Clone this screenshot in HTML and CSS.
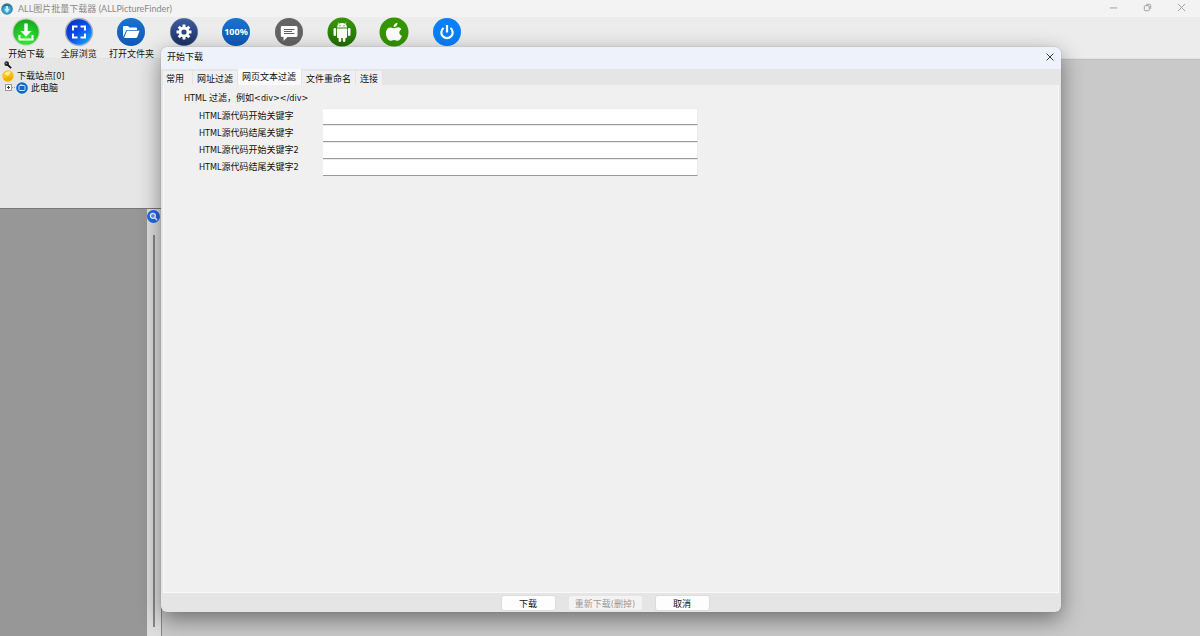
FILE: index.html
```html
<!DOCTYPE html>
<html lang="zh-CN">
<head>
<meta charset="utf-8">
<title>ALL图片批量下载器 (ALLPictureFinder)</title>
<link rel="stylesheet" href="styles.css">
</head>
<body>
<div class="app">
  <header class="titlebar">
    <svg class="logo" viewBox="0 0 12 12" aria-hidden="true">
      <defs><radialGradient id="globe" cx=".5" cy=".55"><stop offset="0" stop-color="#8ee4f4"/><stop offset=".6" stop-color="#35a3d0"/><stop offset="1" stop-color="#3d7898"/></radialGradient></defs>
      <circle cx="6" cy="6" r="5.8" fill="url(#globe)"/>
      <path d="M1 4q2-3 5-3t5 3l-3-1-2 1-2-1z" fill="#376f91"/>
      <path d="M5 3h2v3h1.500l-2.500 4-2.500-4h1.500z" fill="#c4f2fb"/>
    </svg>
    <h1 class="app-title">ALL图片批量下载器 (ALLPictureFinder)</h1>
    <div class="window-controls">
      <button class="window-button" aria-label="最小化"><svg viewBox="0 0 10 10"><path d="M1 5.500h8"/></svg></button>
      <button class="window-button" aria-label="还原"><svg viewBox="0 0 10 10"><rect x="1.500" y="3" width="5.500" height="5.500" rx="1"/><path d="M3.500 1.500h4q1 0 1 1v4"/></svg></button>
      <button class="window-button" aria-label="关闭"><svg viewBox="0 0 10 10"><path d="M1 1l8 8M9 1l-8 8"/></svg></button>
    </div>
  </header>

  <nav class="toolbar">
    <button class="tool">
      <svg class="tool-icon" viewBox="0 0 28 28"><defs><radialGradient id="green" cx=".5" cy=".8" r=".8"><stop offset="0" stop-color="#32f032"/><stop offset="1" stop-color="#14a81c"/></radialGradient></defs>
        <circle cx="14" cy="14" r="13.800" fill="#c4d0c4"/><circle cx="14" cy="14" r="12.600" fill="url(#green)"/>
        <path d="M12.300 5.500h3.400v7.500h3.800L14 18.800 8.500 13h3.800z" fill="#fff"/><path d="M7.500 17v4.500h13V17" fill="none" stroke="#fff" stroke-width="2"/></svg>
      <span>开始下载</span>
    </button>
    <button class="tool">
      <svg class="tool-icon" viewBox="0 0 28 28"><defs><linearGradient id="screen" x1="0" y1="0" x2="1" y2="1"><stop offset="0" stop-color="#0728b8"/><stop offset=".5" stop-color="#0a50f0"/><stop offset="1" stop-color="#16b8ff"/></linearGradient></defs>
        <circle cx="14" cy="14" r="14.200" fill="#a9b0c0"/><circle cx="14" cy="14" r="12.800" fill="url(#screen)"/>
        <path d="M12.500 8.500H8v4M15.500 8.500H20v4M8 15.500v4h4.500M20 15.500v4h-4.500" fill="none" stroke="#fff" stroke-width="2"/></svg>
      <span>全屏浏览</span>
    </button>
    <button class="tool">
      <svg class="tool-icon" viewBox="0 0 28 28"><defs><linearGradient id="blue" x1="0" y1="0" x2="0" y2="1"><stop offset="0" stop-color="#1873cf"/><stop offset="1" stop-color="#1058b4"/></linearGradient></defs>
        <circle cx="14" cy="14" r="14" fill="url(#blue)"/>
        <path d="M6 19V9q0-1 1-1h4l1.500 1.500H19q1 0 1 1V12H9.500z" fill="#fff"/><path d="M10 12.700h12.500L20.300 19q-.3 1-1.300 1H7z" fill="#fff"/></svg>
      <span>打开文件夹</span>
    </button>
    <button class="tool" aria-label="设置">
      <svg class="tool-icon" viewBox="0 0 28 28"><defs><linearGradient id="navy" x1="0" y1="0" x2="0" y2="1"><stop offset="0" stop-color="#3b5c9f"/><stop offset="1" stop-color="#1d2f63"/></linearGradient></defs>
        <circle cx="14" cy="14" r="13.800" fill="url(#navy)" stroke="#7385ad" stroke-width=".5"/>
        <g stroke="#fff" stroke-width="3"><path d="M14 6.500v15M6.500 14h15M8.700 8.700l10.600 10.600M19.300 8.700L8.700 19.300"/></g><circle cx="14" cy="14" r="5.400" fill="#fff"/><circle cx="14" cy="14" r="2.600" fill="#2c467f"/></svg>
    </button>
    <button class="tool" aria-label="100%">
      <svg class="tool-icon" viewBox="0 0 28 28"><circle cx="14" cy="14" r="14" fill="url(#blue)"/><text class="zoom-text" x="14" y="17" text-anchor="middle">100%</text></svg>
    </button>
    <button class="tool" aria-label="留言">
      <svg class="tool-icon" viewBox="0 0 28 28"><circle cx="14" cy="14" r="14" fill="#646464"/>
        <path d="M7 8h14q1.500 0 1.500 1.500v8Q22.500 19 21 19h-8.500l-4 4v-4H7q-1.200 0-1.200-1.500v-8Q5.800 8 7 8z" fill="#fff"/><path d="M9 11.500h10.500M9 13.500h8M9 15.500h10.500" stroke="#646464"/></svg>
    </button>
    <button class="tool" aria-label="Android">
      <svg class="tool-icon" viewBox="0 0 28 28"><defs><linearGradient id="android" x1="0" y1="0" x2="0" y2="1"><stop offset="0" stop-color="#389606"/><stop offset="1" stop-color="#217000"/></linearGradient></defs>
        <circle cx="14" cy="14" r="14.500" fill="url(#android)"/>
        <g fill="#fff"><path d="M9 9.500a5 4.500 0 0 1 10 0z"/><path d="M9 10.500h10v8.500q0 1-1 1h-8q-1 0-1-1z"/><rect x="5.500" y="10" width="2.600" height="8" rx="1.300"/><rect x="19.900" y="10" width="2.600" height="8" rx="1.300"/><rect x="10.600" y="18" width="2.600" height="6" rx="1.200"/><rect x="14.800" y="18" width="2.600" height="6" rx="1.200"/></g>
        <path d="M11 6L10 4.500M17 6l1-1.500" stroke="#fff" stroke-width=".7"/><circle cx="12" cy="7.700" r=".6" fill="#2d8003"/><circle cx="16" cy="7.700" r=".6" fill="#2d8003"/></svg>
    </button>
    <button class="tool" aria-label="Apple">
      <svg class="tool-icon" viewBox="0 0 28 28"><circle cx="14" cy="14" r="14.500" fill="#359500"/>
        <path d="M14 10.300c1.500-.1 2.400-1 4-1 1.500 0 2.700.8 3.400 1.900-3 1.700-2.600 5.400.5 6.700-.8 2.100-2.200 4.700-4.100 4.800-1.400.1-2-.8-3.700-.8s-2.300.8-3.700.8c-2.500 0-5-5.200-4.400-8.800.3-2.700 2.200-4.500 4.400-4.500 1.500 0 2.400.9 3.600.9z" fill="#fff"/><path d="M13.600 9.200c-.2-2.300 1.500-4.300 3.800-4.500.2 2.400-1.500 4.400-3.800 4.500z" fill="#fff"/></svg>
    </button>
    <button class="tool" aria-label="退出">
      <svg class="tool-icon" viewBox="0 0 28 28"><circle cx="14" cy="14" r="14" fill="#0880fa"/>
        <path d="M10.500 10a5.700 5.700 0 1 0 7 0M14 7v7.500" fill="none" stroke="#fff" stroke-width="2.200"/></svg>
    </button>
  </nav>

  <div class="workspace">
    <aside class="sidebar">
      <section class="tree-panel">
        <svg class="pin" viewBox="0 0 9 9" aria-hidden="true"><circle cx="3" cy="3" r="2.600" fill="#222"/><path d="M4 4l4 4" stroke="#111" stroke-width="2"/><circle cx="2.600" cy="2.600" r="1" fill="#888"/></svg>
        <ul class="tree">
          <li class="tree-row">
            <svg class="tree-icon" viewBox="0 0 12 12"><circle cx="6" cy="6" r="5.700" fill="#f8c211"/><path d="M2 4q3-4 7-2L6 6z" fill="#ffee91"/><path d="M1 9q4-2 10-3-1 5-5 5.600Q3 11.500 1 9z" fill="#f5a900"/></svg>
            <span>下载站点[0]</span>
          </li>
          <li class="tree-row tree-child">
            <svg class="expander" viewBox="0 0 10 8"><rect x=".5" y=".5" width="6" height="6" fill="#fff" stroke="#999"/><path d="M2 3.500h3M3.500 2v3" stroke="#345"/><path d="M7 3.500h3" stroke="#999" stroke-dasharray="1 1"/></svg>
            <svg class="tree-icon" viewBox="0 0 12 12"><circle cx="6" cy="6" r="5.800" fill="#0d66cb"/><rect x="3" y="3.500" width="6" height="5" rx=".7" fill="none" stroke="#c8e4ff"/><path d="M4 3h2.500" stroke="#c8e4ff"/></svg>
            <span>此电脑</span>
          </li>
        </ul>
      </section>
      <section class="preview">
        <div class="preview-canvas"></div>
        <div class="zoom-strip">
          <button class="zoom-button" aria-label="缩放"><svg viewBox="0 0 13 13"><circle cx="6.500" cy="6.500" r="6.500" fill="#246ae4"/><circle cx="5.900" cy="5.800" r="2.500" fill="#5f9bff" stroke="#fff" stroke-width="1.200"/><path d="M7.800 7.800l2.400 2.400" stroke="#fff" stroke-width="1.400"/></svg></button>
          <div class="zoom-track"></div>
        </div>
      </section>
    </aside>
    <main class="gallery"></main>
  </div>

  <div class="dialog" role="dialog" aria-labelledby="dialog-title">
    <header class="dialog-header">
      <h2 class="dialog-title" id="dialog-title">开始下载</h2>
      <button class="dialog-close" aria-label="关闭"><svg viewBox="0 0 9 9"><path d="M.7.7l7.600 7.600M8.300.7L.7 8.300"/></svg></button>
    </header>
    <div class="tabs" role="tablist">
      <button class="tab tab-first" role="tab">常用</button>
      <button class="tab" role="tab">网址过滤</button>
      <button class="tab tab-active" role="tab" aria-selected="true">网页文本过滤</button>
      <button class="tab" role="tab">文件重命名</button>
      <button class="tab" role="tab">连接</button>
    </div>
    <form class="panel" id="filters">
      <p class="hint">HTML 过滤，例如&lt;div&gt;&lt;/div&gt;</p>
      <div class="fields">
        <label class="field-label" for="start1">HTML源代码开始关键字</label><input class="field" id="start1" type="text">
        <label class="field-label" for="end1">HTML源代码结尾关键字</label><input class="field" id="end1" type="text">
        <label class="field-label" for="start2">HTML源代码开始关键字2</label><input class="field" id="start2" type="text">
        <label class="field-label" for="end2">HTML源代码结尾关键字2</label><input class="field" id="end2" type="text">
      </div>
    </form>
    <footer class="dialog-footer">
      <button class="action">下载</button>
      <button class="action action-wide" disabled>重新下载(删掉)</button>
      <button class="action">取消</button>
    </footer>
  </div>
</div>
</body>
</html>
```

FILE: styles.css
```css
* { box-sizing: border-box; }

body {
  margin: 0;
  font: 9px/12px "DejaVu Sans Condensed", "Noto Sans CJK SC", sans-serif;
  color: #111;
}

h1, h2, p, ul { margin: 0; padding: 0; font-size: inherit; font-weight: normal; }

button {
  margin: 0;
  padding: 0;
  border: 0;
  background: none;
  font: inherit;
  color: inherit;
  white-space: nowrap;
}

svg { display: block; overflow: visible; }

.app {
  position: relative;
  display: flex;
  flex-direction: column;
  height: 100vh;
  overflow: hidden;
}

.titlebar {
  display: flex;
  align-items: center;
  height: 17px;
  padding-left: 1px;
  background: #f3f3f3;
  color: #8a8a8a;
}
.logo { width: 12px; height: 12px; }
.app-title { margin-left: 5px; font-family: Lato, "Noto Sans CJK SC", sans-serif; }
.window-controls { display: flex; margin-left: auto; padding-right: 2px; }
.window-button { display: grid; place-items: center; width: 34px; height: 17px; padding-bottom: 2px; }
.window-button svg { width: 9px; height: 9px; fill: none; stroke: #999; }

.toolbar {
  display: grid;
  grid-template-columns: repeat(9, 1fr);
  height: 42px;
  padding: 1px calc(100% - 473px) 0 0;
  background: #ececec;
  border-bottom: 1px solid #e2e2e2;
}
.tool { display: flex; flex-direction: column; align-items: center; }
.tool-icon { width: 28px; height: 28px; }
.tool span { margin-top: 2px; }
.zoom-text { font: bold 9px "Noto Sans", sans-serif; fill: #fff; }

.workspace { display: flex; flex: 1; min-height: 0; }
.sidebar { display: flex; flex-direction: column; width: 162px; }
.tree-panel {
  flex: 0 0 150px;
  padding: 2px;
  background: #e6e6e6;
  border-bottom: 1px solid #777;
}
.pin { width: 8px; height: 8px; margin: 0 0 1px 2px; }
.tree { list-style: none; }
.tree-row { display: flex; align-items: center; gap: 3px; height: 12px; }
.tree-child { padding-left: 3px; }
.tree-icon { width: 12px; height: 12px; }
.expander { width: 10px; height: 8px; margin-right: -2px; }
.preview { display: flex; flex: 1; }
.preview-canvas { flex: 1; background: #979797; }
.zoom-strip {
  display: flex;
  flex-direction: column;
  align-items: center;
  width: 15px;
  padding: 1px 1px 9px 0;
  background: #dedede;
  border-right: 1px solid #888;
}
.zoom-button svg { width: 13px; height: 13px; }
.zoom-track { flex: 1; width: 2px; margin-top: 12px; background: #888; }
.gallery { flex: 1; background: #c9c9c9; border-top: 1px solid #bfbfbf; }

.dialog {
  position: absolute;
  top: 47px;
  right: 139px;
  bottom: 24px;
  left: 161px;
  display: flex;
  flex-direction: column;
  overflow: hidden;
  border-radius: 6px;
  background: #e5e5e5;
  box-shadow: 0 0 1px #777, 0 7px 22px rgba(0, 0, 0, .45);
}
.dialog-header {
  display: flex;
  align-items: center;
  justify-content: space-between;
  height: 22px;
  padding: 0 7px 2px 6px;
  background: #edf2fb;
}
.dialog-close { display: grid; place-items: center; height: 16px; }
.dialog-close svg { width: 8px; height: 8px; fill: none; stroke: #222; }

.tabs { display: flex; align-items: flex-end; height: 16px; padding-left: 2px; }
.tab {
  height: 14px;
  padding: 1px 4px 0;
  background: #f0f0f0;
  border-right: 1px solid #e3e3e3;
}
.tab-first { padding-left: 3px; padding-right: 8px; }
.tab-active { height: 16px; padding: 0 5px 0 4px; background: #fafafa; }

.panel {
  flex: 1;
  margin: 0 2px;
  padding: 7px 20px;
  background: #f0f0f0;
  border: solid #f9f9f9;
  border-width: 0 1px 1px;
}
.fields {
  display: grid;
  grid-template-columns: 124px 375px;
  grid-auto-rows: 17px;
  margin: 4px 0 0 15px;
}
.field-label { padding-top: 2px; }
.field {
  width: 100%;
  height: 17px;
  padding: 0 3px;
  border: solid #ececec;
  border-width: 1px 1px 1px 0;
  border-bottom-color: #999;
  background: #fff;
  font: inherit;
  outline: 0;
}

.dialog-footer {
  display: flex;
  align-items: center;
  justify-content: center;
  gap: 14px;
  height: 19px;
  padding-right: 12px;
}
.action {
  width: 53px;
  height: 14px;
  padding-top: 2px;
  border-radius: 2px;
  background: #fdfdfd;
  box-shadow: 0 0 0 1px #dcdcdc;
}
.action-wide { width: 73px; }
.action:disabled { background: #f3f3f3; color: #999; box-shadow: none; }
```
